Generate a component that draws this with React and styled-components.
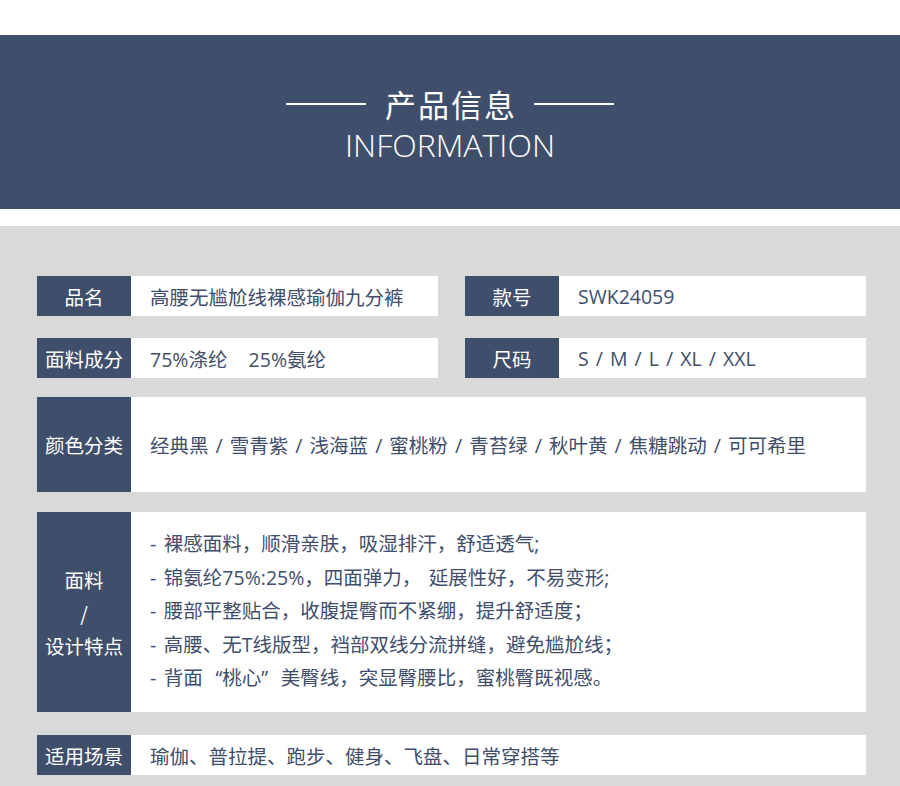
import React from 'react';
import styled, { createGlobalStyle } from 'styled-components';

const GlobalStyle = createGlobalStyle`
  body {
    margin: 0;
    background: #ffffff;
    font-family: "Open Sans", "Noto Sans CJK SC", sans-serif;
  }
`;

const NAVY = '#3f4f6b';

function App() {
  return (
    <Page>
      <GlobalStyle />
      <Banner>
        <TitleRow>
          <Rule />
          <Title>产品信息</Title>
          <Rule />
        </TitleRow>
        <Subtitle>INFORMATION</Subtitle>
      </Banner>

      <InfoArea>
        <TwoCols>
          <Row>
            <Label>品名</Label>
            <Value>高腰无尴尬线裸感瑜伽九分裤</Value>
          </Row>
          <Row>
            <Label>款号</Label>
            <Value>SWK24059</Value>
          </Row>
        </TwoCols>

        <TwoCols $top={22}>
          <Row>
            <Label>面料成分</Label>
            <Value>75%涤纶&nbsp;&nbsp;&nbsp;25%氨纶</Value>
          </Row>
          <Row>
            <Label>尺码</Label>
            <Value>S / M / L / XL / XXL</Value>
          </Row>
        </TwoCols>

        <Row $top={19} $height={95}>
          <Label>颜色分类</Label>
          <Value>经典黑 / 雪青紫 / 浅海蓝 / 蜜桃粉 / 青苔绿 / 秋叶黄 / 焦糖跳动 / 可可希里</Value>
        </Row>

        <Row $top={20} $height={200}>
          <Label $stack>
            <span>面料</span>
            <span>/</span>
            <span>设计特点</span>
          </Label>
          <FeatureList>
            <li>- 裸感面料，顺滑亲肤，吸湿排汗，舒适透气;</li>
            <li>- 锦氨纶75%:25%，四面弹力， 延展性好，不易变形;</li>
            <li>- 腰部平整贴合，收腹提臀而不紧绷，提升舒适度；</li>
            <li>- 高腰、无T线版型，裆部双线分流拼缝，避免尴尬线；</li>
            <li>
              - 背面<Quote>“</Quote>桃心<Quote $close>”</Quote>美臀线，突显臀腰比，蜜桃臀既视感。
            </li>
          </FeatureList>
        </Row>

        <Row $top={23}>
          <Label>适用场景</Label>
          <Value>瑜伽、普拉提、跑步、健身、飞盘、日常穿搭等</Value>
        </Row>
      </InfoArea>
    </Page>
  );
}

const Page = styled.div`
  width: 900px;
  min-height: 786px;
  background: #d9d9d9;
  overflow: hidden;
`;

const Banner = styled.header`
  margin-top: 35px;
  height: 170px;
  padding-top: 4px;
  background: ${NAVY};
  border-bottom: 17px solid #ffffff;
  box-shadow: 0 -35px 0 #ffffff;
  display: flex;
  flex-direction: column;
  align-items: center;
  justify-content: center;
  color: #ffffff;
`;

const TitleRow = styled.div`
  display: flex;
  align-items: center;
  gap: 17px;
`;

const Rule = styled.span`
  width: 80px;
  height: 2px;
  background: #ffffff;
`;

const Title = styled.h1`
  margin: 0;
  font-family: "Noto Sans CJK SC", sans-serif;
  font-weight: 400;
  font-size: 31px;
  line-height: 40px;
  letter-spacing: 2px;
  padding-left: 2px;
`;

const Subtitle = styled.div`
  font-family: "Open Sans", sans-serif;
  font-weight: 300;
  font-size: 32px;
  line-height: 38px;
  margin-top: 2px;
`;

const InfoArea = styled.section`
  padding: 50px 34px 11px 37px;
  display: flex;
  flex-direction: column;
`;

const TwoCols = styled.div`
  display: grid;
  grid-template-columns: 401px 401px;
  column-gap: 27px;
  margin-top: ${(p) => p.$top || 0}px;
`;

const Row = styled.div`
  display: flex;
  height: ${(p) => p.$height || 40}px;
  margin-top: ${(p) => p.$top || 0}px;
  background: #ffffff;
`;

const Label = styled.div`
  flex: 0 0 94px;
  background: ${NAVY};
  color: #ffffff;
  font-family: "Noto Sans CJK SC", sans-serif;
  font-size: 19.5px;
  display: flex;
  flex-direction: ${(p) => (p.$stack ? 'column' : 'row')};
  align-items: center;
  justify-content: center;
  line-height: 33px;
  white-space: nowrap;
`;

const Value = styled.div`
  flex: 1;
  display: flex;
  align-items: center;
  padding-left: 19px;
  color: #3f4e6a;
  font-size: 19.5px;
  word-spacing: 2px;
  white-space: pre;
`;

const FeatureList = styled.ul`
  flex: 1;
  list-style: none;
  margin: 0;
  padding: 15px 0 0 19px;
  color: #3f4e6a;
  font-size: 19.5px;
  line-height: 33.5px;
  word-spacing: 2.5px;
  white-space: nowrap;
`;

const Quote = styled.span`
  display: inline-block;
  width: 1em;
  text-align: ${(p) => (p.$close ? 'left' : 'right')};
`;

export default App;
